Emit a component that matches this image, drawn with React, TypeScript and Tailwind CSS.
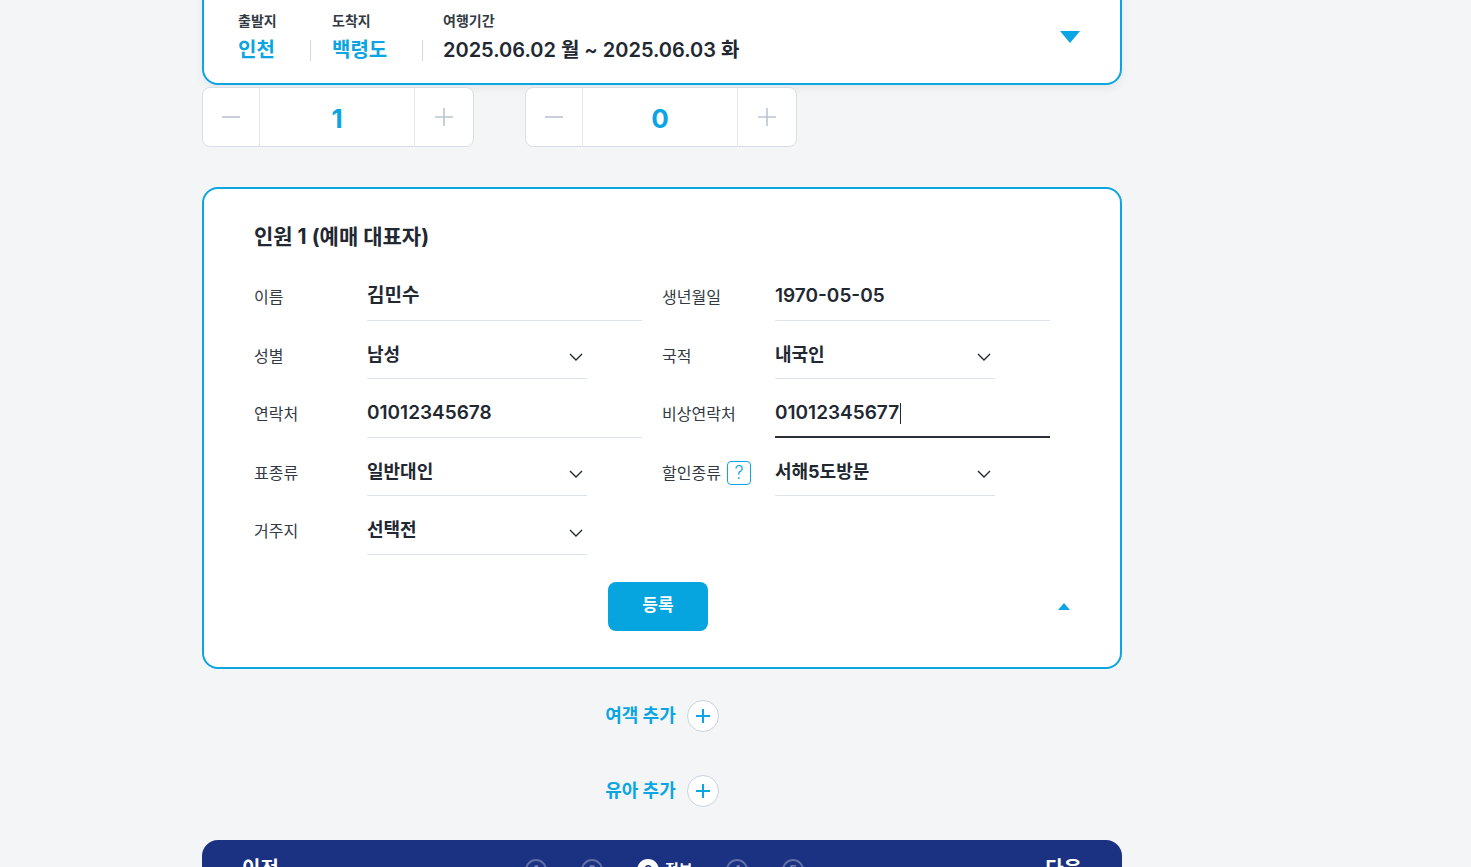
import React from "react";

const SKY = "text-[#0aa5e2]";

const Chevron: React.FC = () => (
	<svg width="14" height="8" viewBox="0 0 14 8" fill="none" className="mt-[6px]">
		<path d="M1 1l6 6 6-6" stroke="#222831" strokeWidth="1.4" />
	</svg>
);

const Counter: React.FC<{ value: number }> = ({ value }) => (
	<div className="flex h-[60px] w-[272px] rounded-lg border border-[#d9dfe8] bg-white">
		<div className="flex w-[57px] items-center justify-center border-r border-[#e2e7ee]">
			<svg width="20" height="20" viewBox="0 0 20 20">
				<path d="M1 10h18" stroke="#b9c3d1" strokeWidth="1.6" />
			</svg>
		</div>
		<div className={`flex flex-1 items-center justify-center pt-[3px] text-[26px] font-bold ${SKY}`}>{value}</div>
		<div className="flex w-[59px] items-center justify-center border-l border-[#e2e7ee]">
			<svg width="20" height="20" viewBox="0 0 20 20">
				<path d="M1 10h18M10 1v18" stroke="#b9c3d1" strokeWidth="1.6" />
			</svg>
		</div>
	</div>
);

const Field: React.FC<{
	label: React.ReactNode;
	value: string;
	select?: boolean;
	focused?: boolean;
}> = ({ label, value, select, focused }) => (
	<div className="flex h-[51px] items-center">
		<div className="flex w-[113px] items-center gap-[6px] pt-[4px] text-[16px] text-[#333a44]">{label}</div>
		{select ? (
			<div className="flex h-full w-[220px] items-center justify-between border-b border-[#dde3eb] pr-[4px] pt-[2px]">
				<span className="text-[18px] font-bold text-[#222831]">{value}</span>
				<Chevron />
			</div>
		) : (
			<div
				className={`flex h-full flex-1 items-center pt-[4px] ${
					focused ? "border-b-2 border-[#2a2f38]" : "border-b border-[#dde3eb]"
				}`}
			>
				<span className="text-[19px] font-semibold text-[#222831]">{value}</span>
				{focused && <span className="ml-[1px] h-[21px] w-[1px] bg-[#222831]" />}
			</div>
		)}
	</div>
);

const AddRow: React.FC<{ title: string }> = ({ title }) => (
	<div className="flex items-center justify-center gap-[11px]">
		<span className={`text-[18px] font-bold ${SKY}`}>{title}</span>
		<span className="flex h-[32px] w-[32px] items-center justify-center rounded-full border border-[#c8d3e2] bg-white">
			<svg width="14" height="14" viewBox="0 0 14 14">
				<path d="M0 7h14M7 0v14" stroke="#0aa5e2" strokeWidth="2" />
			</svg>
		</span>
	</div>
);

const Step: React.FC<{ n: number; active?: boolean }> = ({ n, active }) => (
	<span
		className={`flex h-[22px] w-[22px] items-center justify-center rounded-full border-2 text-[12px] font-bold ${
			active ? "border-white bg-white text-[#1b3181]" : "border-white/30 text-white/40"
		}`}
	>
		{n}
	</span>
);

const Dot: React.FC = () => <span className="w-[22px] text-center text-[10px] text-white/40">·</span>;

export default function App() {
	return (
		<div className="h-[867px] overflow-hidden bg-[#f4f5f7] font-['Inter','Noto_Sans_CJK_KR',sans-serif]">
			<div className="ml-[202px] w-[920px]">
				<div className="-mt-[16px] flex items-center justify-between rounded-b-2xl border-2 border-[#0aa5e2] bg-white pb-[19px] pl-[34px] pr-[40px] pt-[24px] shadow-[0_4px_10px_rgba(0,0,0,0.06)]">
					<div className="flex">
						<div className="w-[72px]">
							<div className="h-[20px] text-[14px] font-semibold text-[#333a44]">출발지</div>
							<div className={`mt-[6px] h-[28px] text-[20px] font-bold leading-[28px] ${SKY}`}>인천</div>
						</div>
						<div className="mt-[30px] h-[21px] w-px bg-[#d2d9e2]" />
						<div className="w-[111px] pl-[21px]">
							<div className="h-[20px] text-[14px] font-semibold text-[#333a44]">도착지</div>
							<div className={`mt-[6px] h-[28px] text-[20px] font-bold leading-[28px] ${SKY}`}>백령도</div>
						</div>
						<div className="mt-[30px] h-[21px] w-px bg-[#d2d9e2]" />
						<div className="pl-[20px]">
							<div className="h-[20px] text-[14px] font-semibold text-[#333a44]">여행기간</div>
							<div className="mt-[6px] h-[28px] text-[20px] font-semibold leading-[28px] text-[#222831]">
								2025.06.02 월 ~ 2025.06.03 화
							</div>
						</div>
					</div>
					<svg width="20" height="12" viewBox="0 0 20 12">
						<path d="M0 0h20L10 12z" fill="#0aa5e2" />
					</svg>
				</div>

				<div className="mt-[2px] flex gap-[51px]">
					<Counter value={1} />
					<Counter value={0} />
				</div>

				<div className="mt-[40px] rounded-2xl border-2 border-[#0aa5e2] bg-white px-[50px] pb-[36px] pt-[32px]">
					<h2 className="text-[21px] font-bold text-[#222831]">인원 1 (예매 대표자)</h2>
					<div className="mt-[17px] grid grid-cols-[388px_388px] gap-x-[20px] gap-y-[7.5px]">
						<Field label="이름" value="김민수" />
						<Field label="생년월일" value="1970-05-05" />
						<Field label="성별" value="남성" select />
						<Field label="국적" value="내국인" select />
						<Field label="연락처" value="01012345678" />
						<Field label="비상연락처" value="01012345677" focused />
						<Field label="표종류" value="일반대인" select />
						<Field
							label={
								<>
									할인종류
									<span className={`flex h-[24px] w-[24px] items-center justify-center rounded border-[1.5px] border-[#0aa5e2] text-[18px] font-light leading-none ${SKY}`}>
										?
									</span>
								</>
							}
							value="서해5도방문"
							select
						/>
						<Field label="거주지" value="선택전" select />
					</div>
					<div className="mt-[27px] grid grid-cols-[1fr_auto_1fr] items-center">
						<div />
						<button className="mr-[8px] h-[49px] w-[100px] rounded-lg bg-[#07a5e0] text-[17px] font-semibold text-white">
							등록
						</button>
						<div className="flex justify-end">
							<svg width="12" height="7" viewBox="0 0 12 7">
								<path d="M0 7h12L6 0z" fill="#0aa5e2" />
							</svg>
						</div>
					</div>
				</div>

				<div className="mt-[31px] flex flex-col gap-[43px]">
					<AddRow title="여객 추가" />
					<AddRow title="유아 추가" />
				</div>

				<div className="mt-[33px] grid h-[70px] grid-cols-[1fr_auto_1fr] items-start rounded-t-2xl bg-[#1b3181] px-[40px] pt-[14px]">
					<span className="text-[20px] font-bold text-white">이전</span>
					<div className="ml-[5px] mt-[5px] flex items-center gap-[6px]">
						<Step n={1} />
						<Dot />
						<Step n={2} />
						<Dot />
						<Step n={3} active />
						<span className="w-[33px] text-[15px] font-bold text-white">정보</span>
						<span className="w-[16px] text-center text-[10px] text-white/40">·</span>
						<Step n={4} />
						<Dot />
						<Step n={5} />
					</div>
					<span className="text-right text-[20px] font-bold text-white">다음</span>
				</div>
			</div>
		</div>
	);
}
